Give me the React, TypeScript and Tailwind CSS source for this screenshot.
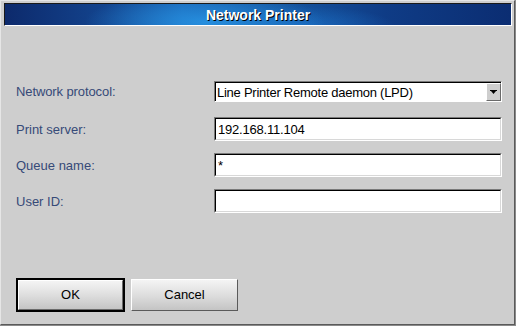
import React from "react";

const font = { fontFamily: '"Liberation Sans", Arial, sans-serif' };

function Field({ label, value }: { label: string; value: string }) {
  return (
    <div className="flex items-center h-[24px]">
      <div className="w-[198px] text-[13px] text-[#364a78] leading-none">{label}</div>
      <div className="w-[288px] h-[24px] border-t border-l border-t-[#7a7a7a] border-l-[#7a7a7a] border-b border-r border-b-white border-r-white">
        <div className="w-full h-full bg-white border-t border-l border-t-black border-l-black border-b border-r border-b-[#d8d8d8] border-r-[#d8d8d8] flex items-center pl-[2px] text-[13px] text-black leading-none tracking-[-0.2px]">
          {value}
        </div>
      </div>
    </div>
  );
}

export default function App() {
  return (
    <div style={font} className="w-[516px] h-[326px] bg-[#8a8a8a] flex">
      <div className="w-[515px] h-[325px] bg-[#cecece] border-l border-t border-l-[#e6e6e6] border-t-[#e6e6e6] border-r border-b border-r-[#5a5a5a] border-b-[#5a5a5a] flex flex-col">
        <div
          className="ml-[3px] mr-[2px] mt-[2px] h-[23px] border-t border-l border-t-[#1a1a1a] border-l-[#1a1a1a] border-b border-r border-b-white border-r-white flex items-center justify-center relative overflow-hidden"
          style={{
            background:
              "radial-gradient(ellipse 120px 30px at 200px 18px, rgba(40,150,230,0.85), rgba(40,150,230,0) 100%), radial-gradient(ellipse 90px 20px at 300px 22px, rgba(30,120,210,0.6), rgba(30,120,210,0) 100%), linear-gradient(90deg, #0d2a6c 0%, #13448e 20%, #1a64b4 35%, #15559f 55%, #0f3c86 75%, #0b2d72 100%)",
          }}
        >
          <span
            className="text-[14px] font-bold text-white leading-none"
            style={{ textShadow: "1px 1px 0 #000" }}
          >
            Network Printer
          </span>
        </div>

        <div className="flex flex-col pl-[15px] mt-[55px]">
          <div className="flex items-center h-[21px]">
            <div className="w-[198px] text-[13px] text-[#364a78] leading-none tracking-[-0.1px]">Network protocol:</div>
            <div className="w-[288px] h-[21px] border-t border-l border-t-[#7a7a7a] border-l-[#7a7a7a] border-b border-r border-b-white border-r-white">
              <div className="w-full h-full bg-white border-t border-l border-t-black border-l-black flex">
                <div className="flex-1 flex items-center pl-[1px] text-[13px] text-black leading-none whitespace-nowrap tracking-[-0.25px]">
                  Line Printer Remote daemon (LPD)
                </div>
                <div className="w-[15px] h-full bg-[#cecece] border-t border-l border-t-white border-l-white border-b border-r border-b-[#6a6a6a] border-r-[#6a6a6a] flex items-center justify-center">
                  <svg width="7" height="4" viewBox="0 0 7 4">
                    <rect x="0" y="0" width="7" height="1" fill="#000" />
                    <polygon points="1,1 6,1 3.5,4" fill="#000" />
                  </svg>
                </div>
              </div>
            </div>
          </div>
          <div className="flex flex-col gap-[12px] mt-[15px]">
            <Field label="Print server:" value="192.168.11.104" />
            <Field label="Queue name:" value="*" />
            <Field label="User ID:" value="" />
          </div>
        </div>

        <div className="flex items-center pl-[15px] mt-[65px] gap-[6px]">
          <div className="w-[109px] h-[34px] border-2 border-black">
            <div
              className="w-full h-full border-t border-l border-t-white border-l-white border-b border-r border-b-[#6a6a6a] border-r-[#6a6a6a] flex items-center justify-center text-[13px] text-black"
              style={{ background: "linear-gradient(180deg, #f4f4f4 0%, #dedede 50%, #c4c4c4 100%)" }}
            >
              OK
            </div>
          </div>
          <div
            className="w-[107px] h-[32px] border-t border-l border-t-white border-l-white border-b border-r border-b-[#5a5a5a] border-r-[#5a5a5a] flex items-center justify-center text-[13px] text-black"
            style={{ background: "linear-gradient(180deg, #f4f4f4 0%, #dedede 50%, #c4c4c4 100%)" }}
          >
            Cancel
          </div>
        </div>
      </div>
    </div>
  );
}
